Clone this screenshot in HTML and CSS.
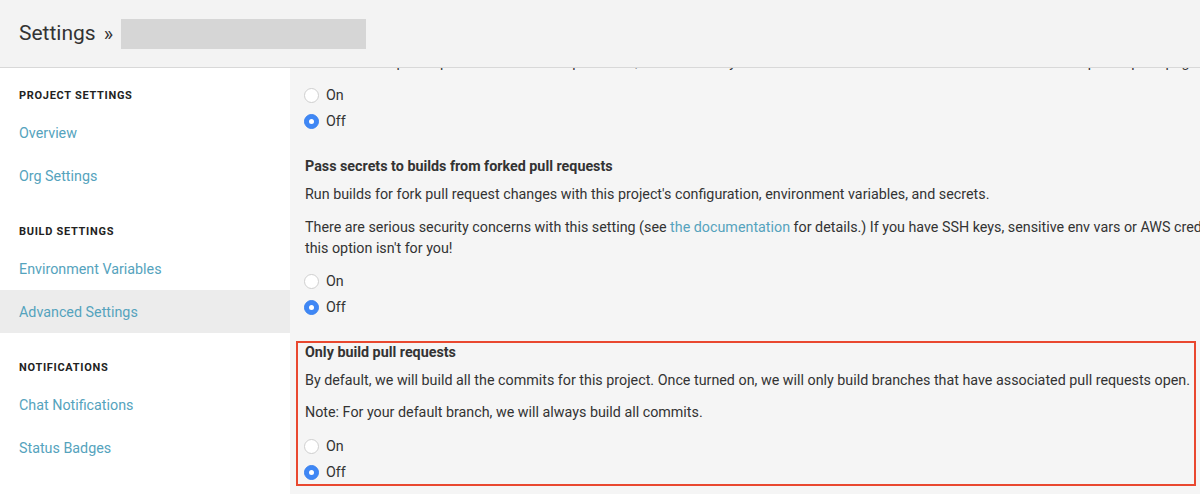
FILE: index.html
```html
<!DOCTYPE html>
<html>
<head>
<meta charset="utf-8">
<link rel="stylesheet" href="styles.css">
</head>
<body>
<header class="topbar">
  <h1 class="title">Settings</h1>
  <span class="crumb-sep">»</span>
  <span class="crumb-mask"></span>
</header>
<div class="page">
  <nav class="sidebar">
    <div class="nav-heading">Project Settings</div>
    <a class="nav-item">Overview</a>
    <a class="nav-item">Org Settings</a>
    <div class="nav-heading spaced">Build Settings</div>
    <a class="nav-item">Environment Variables</a>
    <a class="nav-item active">Advanced Settings</a>
    <div class="nav-heading spaced">Notifications</div>
    <a class="nav-item">Chat Notifications</a>
    <a class="nav-item">Status Badges</a>
  </nav>
  <main class="main">
    <p class="hidden-line">Run builds for pull requests from forked repositories, as well as for your own branches. Results will be shown on the GitHub pull request page.</p>
    <div class="radios first">
      <label class="radio"><span class="dot"></span>On</label>
      <label class="radio"><span class="dot checked"></span>Off</label>
    </div>

    <h3 class="setting-title">Pass secrets to builds from forked pull requests</h3>
    <p class="para p1">Run builds for fork pull request changes with this project's configuration, environment variables, and secrets.</p>
    <p class="para p2"><span class="nowrap">There are serious security concerns with this setting (see <a class="link">the documentation</a> for details.) If you have SSH keys, sensitive env vars or AWS cred</span><br>this option isn't for you!</p>
    <div class="radios">
      <label class="radio"><span class="dot"></span>On</label>
      <label class="radio"><span class="dot checked"></span>Off</label>
    </div>

    <section class="highlight">
      <h3 class="setting-title boxed">Only build pull requests</h3>
      <p class="para b1">By default, we will build all the commits for this project. Once turned on, we will only build branches that have associated pull requests open.</p>
      <p class="para b2">Note: For your default branch, we will always build all commits.</p>
      <div class="radios boxed-radios">
        <label class="radio"><span class="dot"></span>On</label>
        <label class="radio"><span class="dot checked"></span>Off</label>
      </div>
    </section>
  </main>
</div>
</body>
</html>
```

FILE: styles.css
```css
html, body {
  margin: 0;
  padding: 0;
  height: 494px;
  overflow: hidden;
  background: #f5f5f5;
  font-family: Roboto, "Liberation Sans", Arial, sans-serif;
  color: #333;
}

.topbar {
  position: fixed;
  top: 0;
  left: 0;
  right: 0;
  height: 67px;
  background: #f3f3f3;
  border-bottom: 1px solid #d8d8d8;
  display: flex;
  align-items: center;
  padding-left: 19px;
  z-index: 10;
}

.title {
  margin: 0;
  font-size: 21px;
  font-weight: 400;
  color: #333;
  line-height: 1;
}

.crumb-sep {
  font-size: 20px;
  margin-left: 8px;
  color: #333;
  line-height: 1;
}

.crumb-mask {
  display: block;
  width: 245px;
  height: 30px;
  background: #d6d6d6;
  margin-left: 8px;
}

.page {
  display: grid;
  grid-template-columns: 290px 1fr;
  height: 494px;
}

.sidebar {
  background: #fff;
  padding-top: 87px;
  display: flex;
  flex-direction: column;
}

.nav-heading {
  font-size: 11px;
  font-weight: 700;
  letter-spacing: 0.7px;
  text-transform: uppercase;
  color: #222;
  line-height: 18px;
  padding-left: 19px;
  margin-bottom: 6px;
}

.nav-heading.spaced {
  margin-top: 26px;
}

.nav-item {
  display: flex;
  align-items: center;
  height: 43px;
  padding-left: 19px;
  font-size: 14.3px;
  color: #55a3bd;
  cursor: pointer;
}

.nav-item.active {
  background: #ececec;
}

.main {
  background: #f5f5f5;
  padding-left: 15px;
  padding-top: 52px;
  overflow: hidden;
  min-width: 0;
}

.hidden-line {
  margin: 0;
  font-size: 14.3px;
  line-height: 20px;
  white-space: nowrap;
}

.radios {
  display: flex;
  flex-direction: column;
  margin-top: 9px;
}

.radios.first {
  margin-top: 10px;
}

.radio {
  display: flex;
  align-items: center;
  height: 26px;
  font-size: 14.3px;
  color: #333;
}

.dot {
  width: 13px;
  height: 13px;
  border-radius: 50%;
  background: #fff;
  border: 1px solid #cfcfcf;
  margin-right: 7px;
  box-sizing: content-box;
  display: flex;
  align-items: center;
  justify-content: center;
  flex-shrink: 0;
  margin-left: -1px;
}

.dot.checked {
  background: #3f87f5;
  border-color: #3a82ef;
}

.dot.checked::after {
  content: "";
  width: 5px;
  height: 5px;
  border-radius: 50%;
  background: #fff;
}

.setting-title {
  margin: 22px 0 0;
  font-size: 14.3px;
  font-weight: 700;
  line-height: 20px;
  color: #333;
}

.para {
  margin: 0;
  font-size: 14.3px;
  line-height: 21px;
  color: #333;
}

.p1 { margin-top: 8px; white-space: nowrap; }
.p2 { margin-top: 12px; }

.nowrap { white-space: nowrap; }

.link {
  color: #55a3bd;
  cursor: pointer;
}

.highlight {
  margin-top: 21px;
  margin-left: -9px;
  width: 889px;
  height: 141px;
  border: 2px solid #e9482f;
  padding-left: 7px;
  box-sizing: content-box;
}

.setting-title.boxed {
  margin-top: 0;
  line-height: 18px;
}

.b1 { margin-top: 9px; white-space: nowrap; }
.b2 { margin-top: 11px; }

.boxed-radios {
  margin-top: 10px;
}
```
